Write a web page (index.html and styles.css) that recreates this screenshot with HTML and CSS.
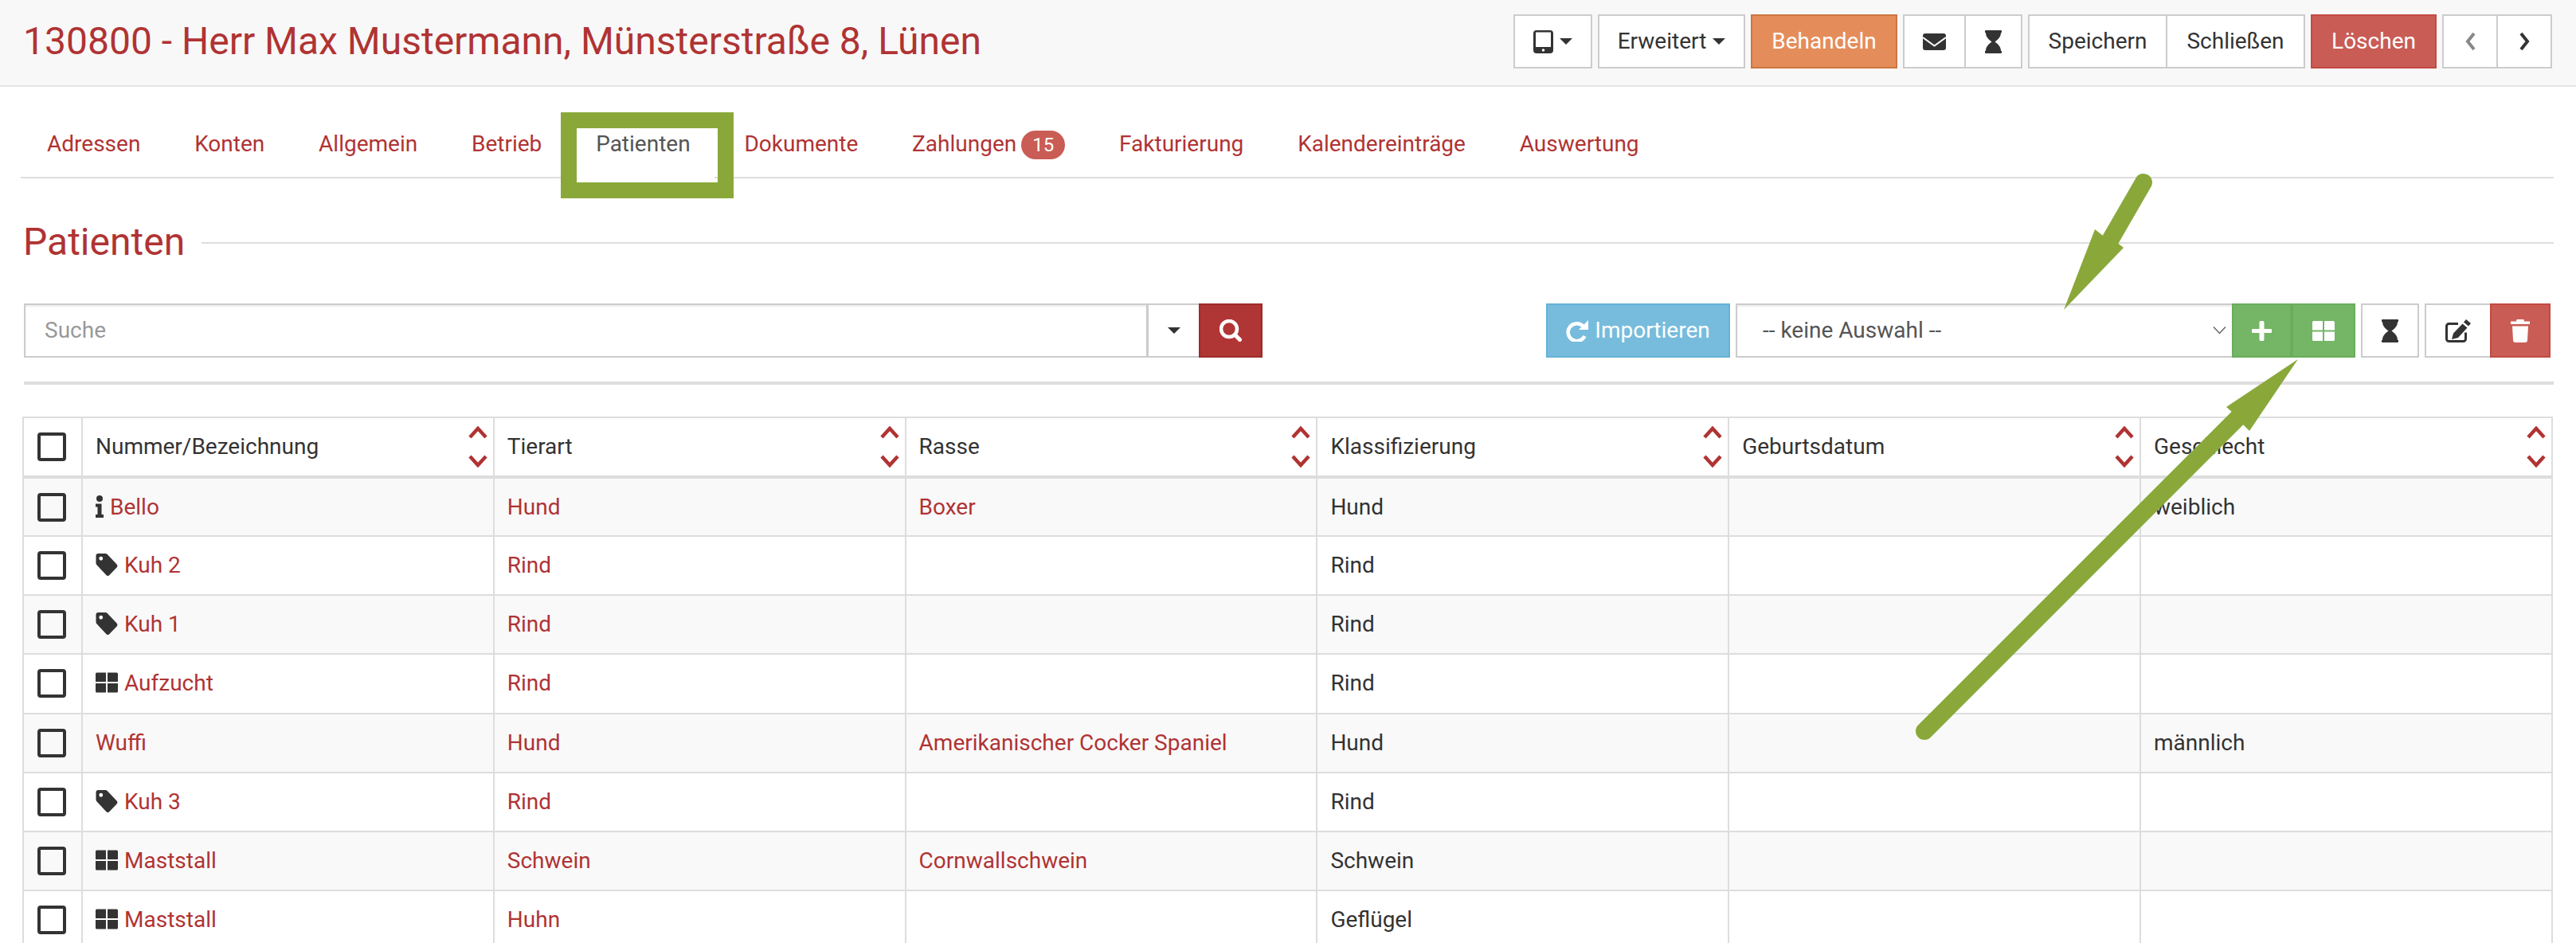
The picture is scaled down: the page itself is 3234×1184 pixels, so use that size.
FILE: index.html
```html
<!DOCTYPE html>
<html lang="de">
<head>
<meta charset="utf-8">
<title>Patienten</title>
<link rel="stylesheet" href="styles.css">
</head>
<body>
<svg class="defs" aria-hidden="true">
  <symbol id="i-tablet" viewBox="0 0 25 29"><path fill-rule="evenodd" d="M4 0h17a4 4 0 0 1 4 4v21a4 4 0 0 1-4 4H4a4 4 0 0 1-4-4V4a4 4 0 0 1 4-4zM3 2.500V21h19V2.500zM12.500 23.200a1.800 1.800 0 1 0 0 3.600a1.800 1.800 0 0 0 0-3.600z"/></symbol>
  <symbol id="i-mail" viewBox="0 0 29 21"><path d="M3 0h23a3 3 0 0 1 3 3v15a3 3 0 0 1-3 3H3a3 3 0 0 1-3-3V3a3 3 0 0 1 3-3z"/><path d="M0 5l14.500 10.500L29 5" fill="none" stroke="#fff" stroke-width="2"/></symbol>
  <symbol id="i-hourglass" viewBox="0 0 21 29"><path d="M1 0h19a1 1 0 0 1 1 1v2h-1c0 5-3 8-7.500 11.500C17 18 20 21 20 26h1v2a1 1 0 0 1-1 1H1a1 1 0 0 1-1-1v-2h1c0-5 3-8 7.500-11.500C4 11 1 8 1 3H0V1a1 1 0 0 1 1-1z"/></symbol>
  <symbol id="i-tag" viewBox="0 0 28 29"><path fill-rule="evenodd" d="M3 0h9a4 4 0 0 1 3 1.200l12 12.800a3 3 0 0 1 0 4l-9.500 10a3 3 0 0 1-4.200 0L1.200 15A4 4 0 0 1 0 12V3a3 3 0 0 1 3-3zM6.500 4a2.500 2.500 0 1 0 0 5a2.500 2.500 0 0 0 0-5z"/></symbol>
  <symbol id="i-grid" viewBox="0 0 28 25"><path d="M1.500 0H13v11.500H0V1.500A1.500 1.500 0 0 1 1.500 0zM15 0h11.500A1.500 1.500 0 0 1 28 1.500v10H15zM0 13.500h13V25H1.500A1.500 1.500 0 0 1 0 23.500zM15 13.500h13v10a1.500 1.500 0 0 1-1.500 1.500H15z"/></symbol>
  <symbol id="i-info" viewBox="0 0 10 28"><circle cx="5" cy="4" r="4"/><path d="M0 10.500h7.500V24H10v4H0v-4h2.500v-9.500H0z"/></symbol>
  <symbol id="i-search" viewBox="0 0 28 28"><circle cx="12" cy="12" r="10" fill="none" stroke="#fff" stroke-width="4.500"/><path d="M19.500 19.500L25.500 25.500" fill="none" stroke="#fff" stroke-width="5" stroke-linecap="round"/></symbol>
  <symbol id="i-refresh" viewBox="0 0 28 27"><path d="M21.500 7.500A11 11 0 1 0 23.500 20" fill="none" stroke="#fff" stroke-width="4.500"/><path d="M28 0v12H16z" fill="#fff"/></symbol>
  <symbol id="i-plus" viewBox="0 0 25 25"><path fill="#fff" d="M11 0h3a1.500 1.500 0 0 1 1.500 1.500v8.500H24a1 1 0 0 1 1 1v3a1 1 0 0 1-1 1h-8.500v8.500A1.500 1.500 0 0 1 14 25h-3a1.500 1.500 0 0 1-1.500-1.500V15H1a1 1 0 0 1-1-1v-3a1 1 0 0 1 1-1h8.500V1.500A1.500 1.500 0 0 1 11 0z"/></symbol>
  <symbol id="i-edit" viewBox="0 0 32 29"><path d="M16 5.500H4.500a3 3 0 0 0-3 3v16a3 3 0 0 0 3 3h18a3 3 0 0 0 3-3v-8" fill="none" stroke="#333" stroke-width="3"/><path fill="#333" d="M26 0l6 5-3 3.500-6-5zM21.500 5.500l6 5L16 23l-8 2 2-7.500z"/></symbol>
  <symbol id="i-trash" viewBox="0 0 24 29"><path fill="#fff" d="M9 0h6a1.500 1.500 0 0 1 1.500 2.500H24v3.500H0V2.500h7.500A1.500 1.500 0 0 1 9 0zM2 8.500h20l-1 17.500a3 3 0 0 1-3 3H6a3 3 0 0 1-3-3z"/></symbol>
  <symbol id="i-up" viewBox="0 0 24 16"><path d="M2 14L12 3l10 11" fill="none" stroke="#b03333" stroke-width="4.500"/></symbol>
  <symbol id="i-down" viewBox="0 0 24 16"><path d="M2 2l10 11L22 2" fill="none" stroke="#b03333" stroke-width="4.500"/></symbol>
  <symbol id="i-left" viewBox="0 0 13 24"><path d="M11 2L3 12l8 10" fill="none" stroke="currentColor" stroke-width="4"/></symbol>
  <symbol id="i-right" viewBox="0 0 13 24"><path d="M2 2l8 10-8 10" fill="none" stroke="currentColor" stroke-width="4"/></symbol>
  <symbol id="i-select" viewBox="0 0 17 10"><path d="M1 0.500l7.500 8 7.500-8" fill="none" stroke="#666" stroke-width="1.500"/></symbol>
</svg>

<header class="topbar">
  <h1 class="title">130800 - Herr Max Mustermann, Münsterstraße 8, Lünen</h1>
  <div class="actions">
    <button class="btn w-tablet"><svg class="ic-tablet"><use href="#i-tablet"/></svg><span class="caret"></span></button>
    <button class="btn w-more">Erweitert<span class="caret"></span></button>
    <button class="btn btn-orange w-treat">Behandeln</button>
    <div class="group">
      <button class="btn w-mail"><svg class="ic-mail"><use href="#i-mail"/></svg></button>
      <button class="btn w-hour"><svg class="ic-hour"><use href="#i-hourglass"/></svg></button>
    </div>
    <div class="group">
      <button class="btn w-save">Speichern</button>
      <button class="btn w-close">Schließen</button>
    </div>
    <button class="btn btn-red w-del">Löschen</button>
    <div class="group">
      <button class="btn w-nav nav-off"><svg class="ic-nav"><use href="#i-left"/></svg></button>
      <button class="btn w-nav"><svg class="ic-nav"><use href="#i-right"/></svg></button>
    </div>
  </div>
</header>

<nav class="tabs">
  <a class="tab">Adressen</a>
  <a class="tab">Konten</a>
  <a class="tab">Allgemein</a>
  <a class="tab">Betrieb</a>
  <a class="tab tab-active">Patienten</a>
  <a class="tab">Dokumente</a>
  <a class="tab">Zahlungen<span class="badge">15</span></a>
  <a class="tab">Fakturierung</a>
  <a class="tab">Kalendereinträge</a>
  <a class="tab">Auswertung</a>
</nav>

<div class="heading">
  <h2 class="heading-text">Patienten</h2>
  <span class="heading-line"></span>
</div>

<section class="toolbar">
  <div class="search">
    <div class="search-input">Suche</div>
    <button class="search-drop"><span class="caret"></span></button>
    <button class="btn btn-primary w-search"><svg class="ic-search"><use href="#i-search"/></svg></button>
  </div>
  <div class="tools">
    <button class="btn btn-blue w-import"><svg class="ic-refresh"><use href="#i-refresh"/></svg>Importieren</button>
    <div class="group">
      <div class="select">-- keine Auswahl --<svg class="ic-select"><use href="#i-select"/></svg></div>
      <button class="btn btn-green w-plus"><svg class="ic-plus"><use href="#i-plus"/></svg></button>
      <button class="btn btn-green w-grid"><svg class="ic-grid-w"><use href="#i-grid"/></svg></button>
    </div>
    <button class="btn w-hour2"><svg class="ic-hour"><use href="#i-hourglass"/></svg></button>
    <div class="group">
      <button class="btn w-edit"><svg class="ic-edit"><use href="#i-edit"/></svg></button>
      <button class="btn btn-red w-trash"><svg class="ic-trash"><use href="#i-trash"/></svg></button>
    </div>
  </div>
</section>

<table class="grid">
  <colgroup><col class="c-check"><col class="c-data"><col class="c-data"><col class="c-data"><col class="c-data"><col class="c-data"><col class="c-data"></colgroup>
  <thead>
    <tr>
      <th><span class="check"></span></th>
      <th><div class="th-in">Nummer/Bezeichnung<span class="sort"><svg><use href="#i-up"/></svg><svg><use href="#i-down"/></svg></span></div></th>
      <th><div class="th-in">Tierart<span class="sort"><svg><use href="#i-up"/></svg><svg><use href="#i-down"/></svg></span></div></th>
      <th><div class="th-in">Rasse<span class="sort"><svg><use href="#i-up"/></svg><svg><use href="#i-down"/></svg></span></div></th>
      <th><div class="th-in">Klassifizierung<span class="sort"><svg><use href="#i-up"/></svg><svg><use href="#i-down"/></svg></span></div></th>
      <th><div class="th-in">Geburtsdatum<span class="sort"><svg><use href="#i-up"/></svg><svg><use href="#i-down"/></svg></span></div></th>
      <th><div class="th-in">Geschlecht<span class="sort"><svg><use href="#i-up"/></svg><svg><use href="#i-down"/></svg></span></div></th>
    </tr>
  </thead>
  <tbody>
    <tr><td><span class="check"></span></td><td><svg class="ic-info"><use href="#i-info"/></svg><a>Bello</a></td><td><a>Hund</a></td><td><a>Boxer</a></td><td>Hund</td><td></td><td>weiblich</td></tr>
    <tr><td><span class="check"></span></td><td><svg class="ic-row"><use href="#i-tag"/></svg><a>Kuh 2</a></td><td><a>Rind</a></td><td></td><td>Rind</td><td></td><td></td></tr>
    <tr><td><span class="check"></span></td><td><svg class="ic-row"><use href="#i-tag"/></svg><a>Kuh 1</a></td><td><a>Rind</a></td><td></td><td>Rind</td><td></td><td></td></tr>
    <tr><td><span class="check"></span></td><td><svg class="ic-row"><use href="#i-grid"/></svg><a>Aufzucht</a></td><td><a>Rind</a></td><td></td><td>Rind</td><td></td><td></td></tr>
    <tr><td><span class="check"></span></td><td><a>Wuffi</a></td><td><a>Hund</a></td><td><a>Amerikanischer Cocker Spaniel</a></td><td>Hund</td><td></td><td>männlich</td></tr>
    <tr><td><span class="check"></span></td><td><svg class="ic-row"><use href="#i-tag"/></svg><a>Kuh 3</a></td><td><a>Rind</a></td><td></td><td>Rind</td><td></td><td></td></tr>
    <tr><td><span class="check"></span></td><td><svg class="ic-row"><use href="#i-grid"/></svg><a>Maststall</a></td><td><a>Schwein</a></td><td><a>Cornwallschwein</a></td><td>Schwein</td><td></td><td></td></tr>
    <tr><td><span class="check"></span></td><td><svg class="ic-row"><use href="#i-grid"/></svg><a>Maststall</a></td><td><a>Huhn</a></td><td></td><td>Geflügel</td><td></td><td></td></tr>
  </tbody>
</table>

<div class="mark-box"></div>
<svg class="arrows" viewBox="0 0 3234 1184" aria-hidden="true">
  <path class="arrow" d="M2691 229L2648 302L2630 288L2591 389L2666 311L2652 300L2693 232Z"/>
  <path class="arrow-shaft" d="M2691 229L2650 300"/>
  <path class="arrow" d="M2885 451L2795 511L2803 518L2815 532L2824 541Z"/>
  <path class="arrow-shaft" d="M2416 918L2809 525"/>
</svg>
</body>
</html>
```

FILE: styles.css
```css
* { box-sizing: border-box; }
html, body { margin: 0; padding: 0; }
body {
  width: 3234px;
  height: 1184px;
  overflow: hidden;
  position: relative;
  background: #fff;
  color: #333;
  font-family: Roboto, "Liberation Sans", sans-serif;
  font-size: 28px;
  line-height: 40px;
}
.defs { position: absolute; width: 0; height: 0; }
svg { display: inline-block; fill: currentColor; }

/* top bar */
.topbar {
  height: 109px;
  background: #f8f8f8;
  border-bottom: 2px solid #e5e5e5;
  display: flex;
  justify-content: space-between;
  padding: 18px 30px 0 29px;
}
.title {
  margin: 0;
  font-size: 48px;
  font-weight: 400;
  line-height: 68px;
  color: #b03333;
}
.actions { display: flex; gap: 7px; height: 68px; }
.group { display: flex; }
.group .btn + .btn { margin-left: -2px; }

.btn {
  height: 68px;
  padding: 0;
  border: 2px solid #ccc;
  background: #fff;
  color: #333;
  font: inherit;
  font-size: 28px;
  display: inline-flex;
  align-items: center;
  justify-content: center;
}
.btn-orange { background: #e58d5a; border-color: #cc7640; color: #fff; }
.btn-red { background: #c95c55; border-color: #c24a43; color: #fff; }
.btn-primary { background: #b03535; border-color: #9c2b2b; }
.btn-blue { background: #77bcdc; border-color: #64b2d6; color: #fff; }
.btn-green { background: #74b566; border-color: #69ad5c; }
.caret {
  display: inline-block;
  width: 0;
  height: 0;
  margin-left: 8px;
  border-top: 8px solid #333;
  border-left: 8px solid transparent;
  border-right: 8px solid transparent;
}
.w-tablet { width: 99px; }
.w-more { width: 185px; }
.w-treat { width: 184px; }
.w-mail { width: 79px; }
.w-hour { width: 73px; }
.w-save { width: 175px; }
.w-close { width: 175px; }
.w-del { width: 158px; }
.w-nav { width: 70px; }
.nav-off { color: #888; }
.ic-tablet { width: 25px; height: 29px; color: #333; }
.ic-mail { width: 29px; height: 21px; color: #333; }
.ic-hour { width: 21px; height: 29px; color: #333; }
.ic-nav { width: 13px; height: 24px; }

/* tabs */
.tabs {
  display: flex;
  margin: 37px 28px 0 26px;
  padding-left: 3px;
  height: 78px;
  border-bottom: 2px solid #ddd;
  gap: 7.8px;
}
.tab {
  padding: 15px 30px 0;
  color: #b03333;
  height: 78px;
  white-space: nowrap;
}
.tab-active { color: #555; background: #fff; }
.badge {
  display: inline-block;
  margin-left: 6px;
  width: 55px;
  height: 36px;
  border-radius: 18px;
  background: #c95c55;
  color: #fff;
  font-size: 24px;
  line-height: 36px;
  text-align: center;
  vertical-align: 0;
}

/* heading */
.heading {
  display: flex;
  align-items: center;
  gap: 21px;
  margin: 48px 28px 0 29px;
  height: 64px;
}
.heading-text {
  margin: 0;
  font-size: 48px;
  font-weight: 400;
  line-height: 64px;
  color: #b03333;
}
.heading-line { flex: 1; height: 2px; margin-top: 2px; background: #ddd; }

/* toolbar */
.toolbar {
  display: flex;
  justify-content: space-between;
  margin: 45px 28px 0 30px;
  padding-bottom: 30px;
  border-bottom: 4px solid #ddd;
  height: 102px;
}
.search { display: flex; height: 68px; }
.search-input {
  width: 1411px;
  height: 68px;
  border: 2px solid #ccc;
  box-shadow: inset 0 2px 2px rgba(0, 0, 0, .08);
  color: #999;
  padding: 12px 24px;
  line-height: 40px;
}
.search-drop {
  width: 66px;
  height: 68px;
  margin-left: -2px;
  background: #fff;
  border: 2px solid #ccc;
  border-left-width: 3px;
  border-right: 0;
  padding: 0;
}
.search-drop .caret { margin-left: 0; display: block; margin: 0 auto; }
.w-search { width: 80px; }
.ic-search { width: 28px; height: 28px; }
.tools { display: flex; gap: 7px; margin-right: 4px; }
.w-import { width: 231px; gap: 8px; }
.ic-refresh { width: 28px; height: 27px; }
.select {
  width: 623px;
  height: 68px;
  border: 2px solid #ccc;
  border-right: 0;
  padding: 0 7px 0 32px;
  display: flex;
  align-items: center;
  justify-content: space-between;
  color: #555;
  box-shadow: inset 0 2px 2px rgba(0, 0, 0, .08);
}
.ic-select { width: 17px; height: 10px; }
.w-plus { width: 75px; }
.w-grid { width: 80px; margin-left: 0 !important; }
.ic-plus { width: 25px; height: 25px; }
.ic-grid-w { width: 28px; height: 25px; color: #fff; }
.w-hour2 { width: 73px; }
.w-edit { width: 82px; border-right: 0; }
.w-trash { width: 76px; margin-left: 0 !important; }
.ic-edit { width: 32px; height: 29px; }
.ic-trash { width: 24px; height: 29px; }

/* table */
.grid {
  margin: 40px 0 0 28px;
  width: 3175px;
  table-layout: fixed;
  border-collapse: collapse;
}
.c-check { width: 74px; }
.c-data { width: 516.8px; }
.grid th, .grid td {
  border: 2px solid #ddd;
  padding: 0 16px;
  font-weight: 400;
  text-align: left;
  white-space: nowrap;
  overflow: hidden;
}
.grid thead tr { height: 75px; }
.grid thead th { border-bottom: 4px solid #ddd; }
.grid tbody tr { height: 74.15px; }
.grid tbody tr:nth-child(odd) { background: #f9f9f9; }
.grid a { color: #b03333; }
.grid th:first-child, .grid td:first-child { padding: 0 0 0 17px; }
.check {
  display: block;
  width: 36px;
  height: 36px;
  border: 4px solid #333;
  border-radius: 4px;
}
.th-in {
  display: flex;
  justify-content: space-between;
  align-items: center;
  margin-right: -9px;
}
.sort { display: flex; flex-direction: column; gap: 20px; width: 24px; }
.sort svg { width: 24px; height: 16px; display: block; }
.ic-row { width: 28px; height: 28px; margin-right: 8px; vertical-align: -4px; color: #333; }
.ic-info { width: 10px; height: 28px; margin-right: 8px; vertical-align: -4px; color: #333; }

/* annotations drawn over the page */
.mark-box {
  position: absolute;
  left: 704px;
  top: 141px;
  width: 217px;
  height: 108px;
  border-style: solid;
  border-color: #8aa83a;
  border-width: 20px;
}
.arrows {
  position: absolute;
  left: 0;
  top: 0;
  width: 3234px;
  height: 1184px;
  pointer-events: none;
}
.arrow { fill: #8aa83a; }
.arrow-shaft { fill: none; stroke: #8aa83a; stroke-width: 22px; stroke-linecap: round; }
```
